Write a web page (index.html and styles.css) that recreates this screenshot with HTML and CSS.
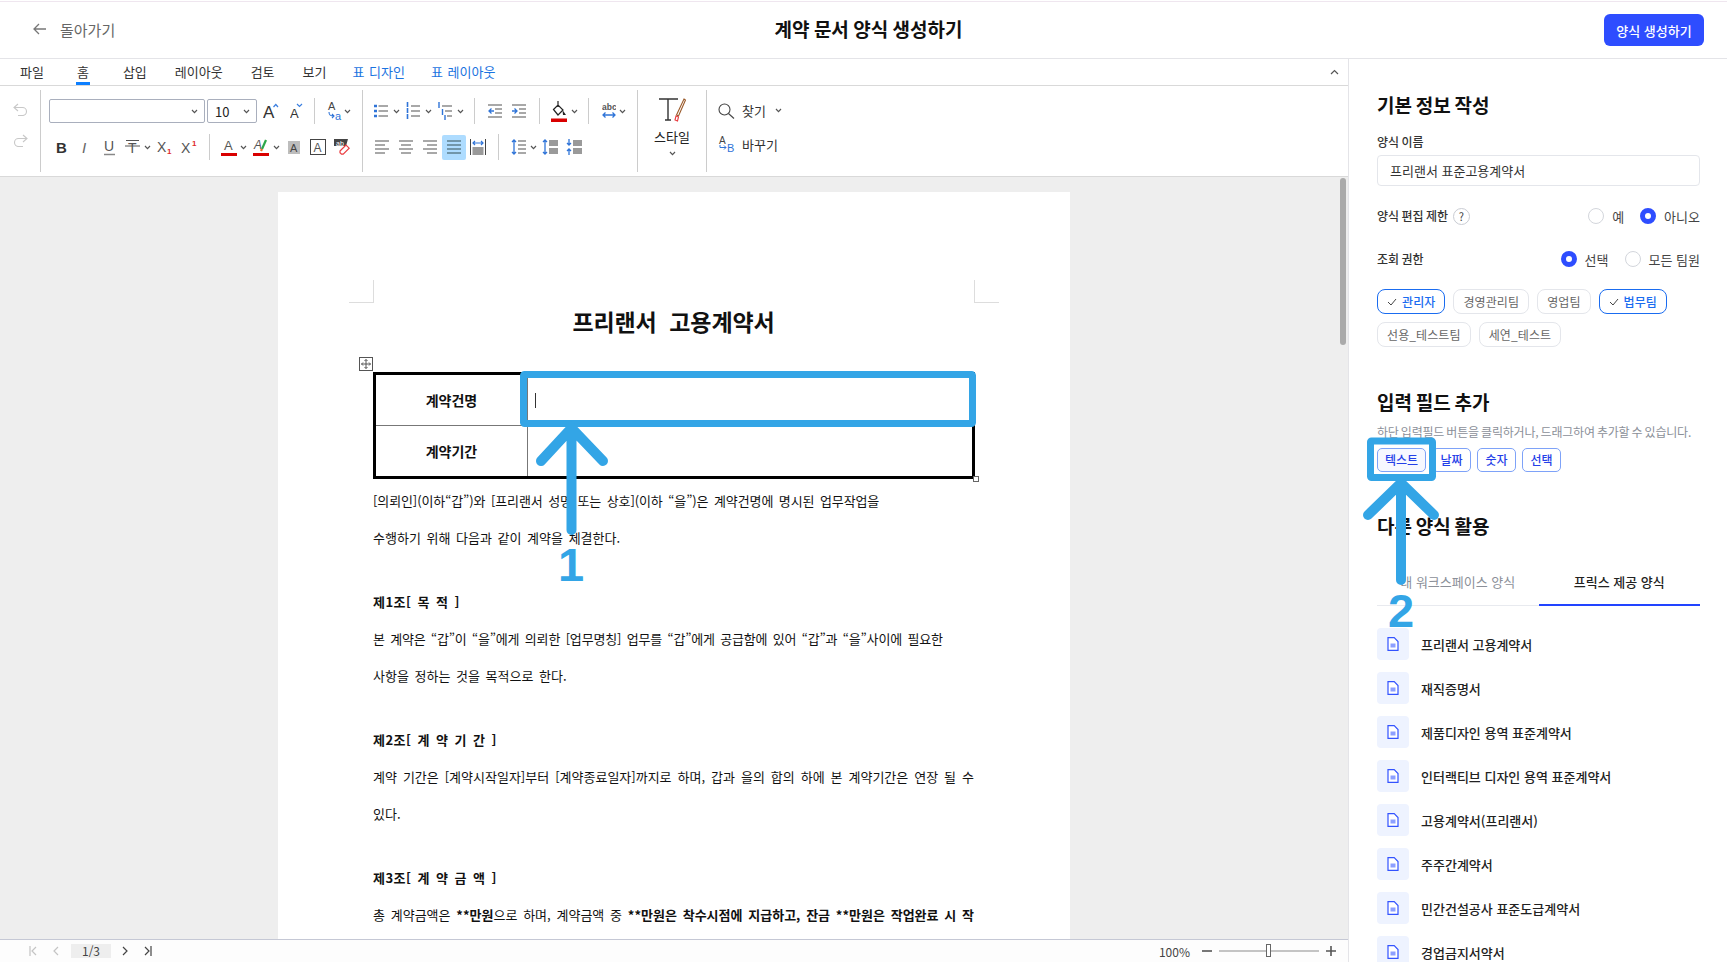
FILE: index.html
```html
<!DOCTYPE html>
<html lang="ko">

<head>
    <meta charset="UTF-8">
    <title>계약 문서 양식 생성하기</title>
    <link rel="stylesheet" href="styles.css">
</head>

<body>
    <svg class="defs" width="0" height="0">
        <symbol id="chev" viewBox="0 0 7 5"><path d="M1 1l2.5 2.6L6 1" fill="none" stroke="#555" stroke-width="1.2"/></symbol>
        <symbol id="doc" viewBox="0 0 12 14"><path d="M1 .7h6.2L11 4.5v8.8H1z" fill="#fff" stroke="#3353ff" stroke-width="1.2"/><rect x="3.5" y="6.5" width="5" height="4" fill="#8da0ff"/></symbol>
    </svg>

    <header class="topbar">
        <a class="back">
            <svg width="14" height="12" viewBox="0 0 14 12"><path d="M6 1L1 6l5 5M1 6h12" fill="none" stroke="#777" stroke-width="1.3"/></svg>
            돌아가기
        </a>
        <h1 class="page-title">계약 문서 양식 생성하기</h1>
        <button class="primary-btn">양식 생성하기</button>
    </header>

    <div class="main">
        <div class="editor">
            <nav class="tabs">
                <span class="tab first">파일</span>
                <span class="tab active">홈</span>
                <span class="tab">삽입</span>
                <span class="tab">레이아웃</span>
                <span class="tab">검토</span>
                <span class="tab view">보기</span>
                <span class="tab blue">표 디자인</span>
                <span class="tab blue">표 레이아웃</span>
                <svg class="collapse" width="9" height="6" viewBox="0 0 9 6"><path d="M1 5l3.5-3.5L8 5" fill="none" stroke="#555" stroke-width="1.2"/></svg>
            </nav>

            <div class="toolbar">
                <div class="group g-undo">
                    <svg width="15" height="13" viewBox="0 0 15 13"><path d="M5 1L1 4.5 5 8M1 4.5h8.5a4 4 0 0 1 0 8H5" fill="none" stroke="#c8c8c8" stroke-width="1.1"/></svg>
                    <svg width="15" height="13" viewBox="0 0 15 13"><path d="M10 1l4 3.5L10 8M14 4.5H5.5a4 4 0 0 0 0 8H10" fill="none" stroke="#c8c8c8" stroke-width="1.1"/></svg>
                </div>

                <div class="group g-font">
                    <div class="row">
                        <div class="select font-name"><svg class="chev"><use href="#chev"/></svg></div>
                        <div class="select font-size ml2"><span>10</span><svg class="chev"><use href="#chev"/></svg></div>
                        <svg class="ml6" width="16" height="18" viewBox="0 0 16 18"><text class="ic-t" x="0" y="16" font-size="17" fill="#333">A</text><path d="M10.500 5l2.300-2.500L15 5" fill="none" stroke="#3b7fe0" stroke-width="1.200"/></svg>
                        <svg class="ml11" width="13" height="18" viewBox="0 0 13 18"><text class="ic-t" x="0" y="16" font-size="13" fill="#333">A</text><path d="M7 2l2.500 2.500L12 2" fill="none" stroke="#3b7fe0" stroke-width="1.200"/></svg>
                        <i class="sep ml11"></i>
                        <svg class="ml12" width="16" height="22" viewBox="0 0 16 22"><text class="ic-t" x="1" y="10" font-size="11" fill="#444">A</text><text class="ic-t" x="8" y="20" font-size="11" fill="#2f74d8">a</text><path d="M2 12c0 3 1 4 5 4M5 14l2 2-2 2" fill="none" stroke="#2f74d8" stroke-width="1.100"/></svg>
                        <svg class="chev ml1"><use href="#chev"/></svg>
                    </div>
                    <div class="row">
                        <svg class="ml7" width="11" height="16" viewBox="0 0 11 16"><text class="ic-t" x="0" y="14" font-size="15" font-weight="700" fill="#333">B</text></svg>
                        <svg class="ml14" width="9" height="16" viewBox="0 0 9 16"><text class="ic-t" x="1" y="14" font-size="15" font-style="italic" fill="#666">I</text></svg>
                        <svg class="ml14" width="11" height="18" viewBox="0 0 11 18"><text class="ic-t" x="0" y="13" font-size="14" fill="#555">U</text><path d="M0 16.500h11" stroke="#888" stroke-width="1.500"/></svg>
                        <svg class="ml10" width="15" height="16" viewBox="0 0 15 16"><text class="ic-t" x="3" y="14" font-size="14" fill="#555">T</text><path d="M0 7h15" stroke="#555" stroke-width="1"/><path d="M1 1.500h13" stroke="#555" stroke-width="1"/></svg>
                        <svg class="chev ml4"><use href="#chev"/></svg>
                        <svg class="ml6" width="15" height="18" viewBox="0 0 15 18"><text class="ic-t" x="0" y="14" font-size="14" fill="#555">X</text><text class="ic-t" x="10" y="16" font-size="8" font-weight="700" fill="#e0282e">1</text></svg>
                        <svg class="ml9" width="16" height="18" viewBox="0 0 16 18"><text class="ic-t" x="0" y="15" font-size="14" fill="#555">X</text><text class="ic-t" x="11" y="8" font-size="8" font-weight="700" fill="#e0282e">1</text></svg>
                        <i class="sep ml12"></i>
                        <svg class="ml11" width="16" height="20" viewBox="0 0 16 20"><text class="ic-t" x="3" y="13" font-size="13" fill="#555">A</text><rect y="16" width="16" height="3" fill="#d90000"/></svg>
                        <svg class="chev ml3"><use href="#chev"/></svg>
                        <svg class="ml6" width="16" height="20" viewBox="0 0 16 20"><text class="ic-t" x="1" y="12" font-size="12" font-style="italic" fill="#555">A</text><path d="M13 3l-4 9" stroke="#2ca84a" stroke-width="2.200"/><path d="M9 12l-1 2" stroke="#e8702a" stroke-width="2.200"/><rect y="16" width="16" height="3" fill="#d90000"/></svg>
                        <svg class="chev ml4"><use href="#chev"/></svg>
                        <svg class="ml8" width="12" height="13" viewBox="0 0 12 13"><rect width="12" height="13" fill="#bdbdbd"/><text class="ic-t" x="2" y="11" font-size="11" fill="#444">A</text></svg>
                        <svg class="ml10" width="16" height="16" viewBox="0 0 16 16"><rect x=".5" y=".5" width="15" height="15" fill="#fff" stroke="#444"/><text class="ic-t" x="3.500" y="13" font-size="12" fill="#555">A</text></svg>
                        <svg class="ml8" width="16" height="16" viewBox="0 0 16 16"><path d="M0 0h14l-2 7H0z" fill="#444"/><text class="ic-t" x="2" y="6.500" font-size="7" fill="#fff">ab</text><path d="M6 12l6-6 3.200 3.200-6 6H7.500L6 13.700z" fill="#fff" stroke="#ea3b3f" stroke-width="1.200"/></svg>
                    </div>
                </div>

                <div class="group g-para">
                    <div class="row">
                        <svg width="14" height="14" viewBox="0 0 14 14"><path d="M4.500 2H14M4.500 7H14M4.500 12H14" stroke="#8c8c8c" stroke-width="1.600"/><path d="M0 2h3M0 7h3M0 12h3" stroke="#2f74d8" stroke-width="2.400"/></svg>
                        <svg class="chev ml5"><use href="#chev"/></svg>
                        <svg class="ml6" width="14" height="18" viewBox="0 0 14 18"><path d="M5 4h9M5 9h9M5 14h9" stroke="#8c8c8c" stroke-width="1.600"/><path d="M1.500 0v18" stroke="#2f74d8" stroke-width="1.600" stroke-dasharray="5 1"/></svg>
                        <svg class="chev ml5"><use href="#chev"/></svg>
                        <svg class="ml6" width="14" height="18" viewBox="0 0 14 18"><path d="M4 4h10M7 9h7M9 14h5" stroke="#8c8c8c" stroke-width="1.600"/><path d="M1 0v6M4.500 7v6M7 13v5" stroke="#2f74d8" stroke-width="1.400"/></svg>
                        <svg class="chev ml5"><use href="#chev"/></svg>
                        <i class="sep ml10"></i>
                        <svg class="ml13" width="14" height="14" viewBox="0 0 14 14"><path d="M0 1h14M7 5h7M7 9h7M0 13h14" stroke="#8c8c8c" stroke-width="1.600"/><path d="M6 7H1M3.500 4.500L1 7l2.500 2.500" fill="none" stroke="#2f74d8" stroke-width="1.300"/></svg>
                        <svg class="ml10" width="14" height="14" viewBox="0 0 14 14"><path d="M0 1h14M7 5h7M7 9h7M0 13h14" stroke="#8c8c8c" stroke-width="1.600"/><path d="M0 7h5M2.500 4.500L5 7 2.500 9.500" fill="none" stroke="#2f74d8" stroke-width="1.300"/></svg>
                        <i class="sep ml13"></i>
                        <svg class="ml11" width="16" height="21" viewBox="0 0 16 21"><path d="M7 0v6M2.500 8.500L7 4l5 5-5 5z" fill="none" stroke="#222" stroke-width="1.200"/><path d="M11.500 9l3.500 5h-3z" fill="#222"/><rect y="17.500" width="16" height="3.500" fill="#d90000"/></svg>
                        <svg class="chev ml4"><use href="#chev"/></svg>
                        <i class="sep ml10"></i>
                        <svg class="ml13" width="14" height="18" viewBox="0 0 14 18"><text class="ic-t" x="0" y="8" font-size="8.500" font-weight="700" fill="#555">abc</text><path d="M1 13h12M3.500 10.500L1 13l2.500 2.500M10.500 10.500L13 13l-2.500 2.500" fill="none" stroke="#2f74d8" stroke-width="1.300"/></svg>
                        <svg class="chev ml3"><use href="#chev"/></svg>
                    </div>
                    <div class="row">
                        <svg class="ml1" width="14" height="14" viewBox="0 0 14 14"><path d="M0 1h14M0 5h10M0 9h14M0 13h10" stroke="#8c8c8c" stroke-width="1.700"/></svg>
                        <svg class="ml10" width="14" height="14" viewBox="0 0 14 14"><path d="M0 1h14M2 5h10M0 9h14M2 13h10" stroke="#8c8c8c" stroke-width="1.700"/></svg>
                        <svg class="ml10" width="14" height="14" viewBox="0 0 14 14"><path d="M0 1h14M4 5h10M0 9h14M4 13h10" stroke="#8c8c8c" stroke-width="1.700"/></svg>
                        <div class="align-on ml5">
                            <svg width="14" height="14" viewBox="0 0 14 14"><path d="M0 1h14M0 5h14M0 9h14M0 13h14" stroke="#5d7f8f" stroke-width="1.700"/></svg>
                        </div>
                        <svg class="ml4" width="16" height="16" viewBox="0 0 16 16"><path d="M.5 0v16M15.500 0v16" stroke="#444"/><rect x="2.500" y="8" width="11" height="8" fill="#9a9a9a"/><path d="M3 4h10M5 2L3 4l2 2M11 2l2 2-2 2" fill="none" stroke="#2f74d8" stroke-width="1.200"/></svg>
                        <i class="sep ml12"></i>
                        <svg class="ml12" width="15" height="16" viewBox="0 0 15 16"><path d="M7 2h8M7 6h8M7 10h8M7 14h8" stroke="#8c8c8c" stroke-width="1.600"/><path d="M3 1v14M1 3l2-2 2 2M1 13l2 2 2-2" fill="none" stroke="#2f74d8" stroke-width="1.300"/></svg>
                        <svg class="chev ml4"><use href="#chev"/></svg>
                        <svg class="ml5" width="16" height="16" viewBox="0 0 16 16"><rect x="7" y="1" width="9" height="6" fill="#9a9a9a"/><rect x="7" y="9" width="9" height="6" fill="#9a9a9a"/><path d="M3 1v14M1 3l2-2 2 2M1 13l2 2 2-2" fill="none" stroke="#2f74d8" stroke-width="1.300"/></svg>
                        <svg class="ml8" width="16" height="16" viewBox="0 0 16 16"><rect x="7" y="1" width="9" height="6" fill="#9a9a9a"/><rect x="7" y="9" width="9" height="6" fill="#9a9a9a"/><path d="M3 0v6M1 4l2 2 2-2M3 16v-6M1 12l2-2 2 2" fill="none" stroke="#2f74d8" stroke-width="1.300"/></svg>
                    </div>
                </div>

                <div class="group g-style">
                    <svg width="27" height="24" viewBox="0 0 27 24"><path d="M0 1h19M9 1v21M6 22h6" fill="none" stroke="#333" stroke-width="1.400"/><path d="M25 1l1.500 1-7 16-2-1z" fill="#fff" stroke="#9a5a2a" stroke-width="1.100"/><path d="M17 18l2.500 1-1 4-2.500-1z" fill="#fff" stroke="#ea3b3f" stroke-width="1.100"/></svg>
                    <span class="style-label">스타일</span>
                    <svg class="chev"><use href="#chev"/></svg>
                </div>

                <div class="group g-find">
                    <div class="find-row">
                        <svg width="17" height="16" viewBox="0 0 17 16"><circle cx="6.500" cy="6.500" r="5.500" fill="none" stroke="#444" stroke-width="1.100"/><path d="M10.500 10.500l5.500 5" stroke="#444" stroke-width="1.100"/></svg>
                        <span>찾기</span>
                        <svg class="chev ml2"><use href="#chev"/></svg>
                    </div>
                    <div class="find-row">
                        <svg width="17" height="17" viewBox="0 0 17 17"><text class="ic-t" x="1" y="8" font-size="10" fill="#444">A</text><text class="ic-t" x="9" y="16" font-size="11" fill="#2f74d8">B</text><path d="M2 9v2.500h6M6 9.500l2 2-2 2" fill="none" stroke="#2f74d8" stroke-width="1"/></svg>
                        <span>바꾸기</span>
                    </div>
                </div>
            </div>

            <div class="doc-area">
                <i class="scroll-thumb"></i>
                <div class="page">
                    <i class="crop crop-l"></i>
                    <i class="crop crop-r"></i>
                    <h2 class="doc-title">프리랜서&nbsp; 고용계약서</h2>

                    <div class="doc-table-wrap">
                        <svg class="move-handle" width="14" height="14" viewBox="0 0 14 14"><rect x=".5" y=".5" width="13" height="13" fill="#fff" stroke="#555"/><path d="M7 2.500v9M2.500 7h9M5.500 4L7 2.500 8.500 4M5.500 10L7 11.500 8.500 10M4 5.500L2.500 7 4 8.500M10 5.500L11.500 7 10 8.500" fill="none" stroke="#555"/></svg>
                        <table class="doc-table">
                            <tr>
                                <th>계약건명</th>
                                <td><i class="caret"></i></td>
                            </tr>
                            <tr>
                                <th>계약기간</th>
                                <td></td>
                            </tr>
                        </table>
                        <i class="resize-handle"></i>
                    </div>

                    <div class="para first">
                        <p class="tight">[의뢰인](이하“갑”)와 [프리랜서 성명 또는 상호](이하 “을”)은 계약건명에 명시된 업무작업을</p>
                        <p>수행하기 위해 다음과 같이 계약을 체결한다.</p>
                    </div>
                    <div class="para">
                        <p class="head"><b>제1조[ 목 적 ]</b></p>
                        <p class="tighter">본 계약은 “갑”이 “을”에게 의뢰한 [업무명칭] 업무를 “갑”에게 공급함에 있어 “갑”과 “을”사이에 필요한</p>
                        <p>사항을 정하는 것을 목적으로 한다.</p>
                    </div>
                    <div class="para">
                        <p class="head"><b>제2조[ 계 약 기 간 ]</b></p>
                        <p class="just">계약 기간은 [계약시작일자]부터 [계약종료일자]까지로 하며, 갑과 을의 합의 하에 본 계약기간은 연장 될 수</p>
                        <p>있다.</p>
                    </div>
                    <div class="para">
                        <p class="head"><b>제3조[ 계 약 금 액 ]</b></p>
                        <p class="just">총 계약금액은 <b>**만원</b>으로 하며, 계약금액 중 <b>**만원은 착수시점에 지급하고, 잔금 **만원은 작업완료 시 작</b></p>
                    </div>
                </div>
            </div>

            <footer class="statusbar">
                <div class="pager">
                    <svg width="8" height="10" viewBox="0 0 8 10"><path d="M1 0v10M7 1L3 5l4 4" fill="none" stroke="#c4c4c4" stroke-width="1.200"/></svg>
                    <svg class="ml16" width="6" height="10" viewBox="0 0 6 10"><path d="M5 1L1 5l4 4" fill="none" stroke="#c4c4c4" stroke-width="1.200"/></svg>
                    <span class="page-no">1/3</span>
                    <svg class="ml11" width="6" height="10" viewBox="0 0 6 10"><path d="M1 1l4 4-4 4" fill="none" stroke="#444" stroke-width="1.200"/></svg>
                    <svg class="ml16" width="8" height="10" viewBox="0 0 8 10"><path d="M7 0v10M1 1l4 4-4 4" fill="none" stroke="#444" stroke-width="1.200"/></svg>
                </div>
                <div class="zoom">
                    <span>100%</span>
                    <svg class="ml12" width="10" height="10" viewBox="0 0 10 10"><path d="M0 5h10" stroke="#555" stroke-width="1.600"/></svg>
                    <div class="slider"><i class="thumb"></i></div>
                    <svg class="ml7" width="10" height="10" viewBox="0 0 10 10"><path d="M0 5h10M5 0v10" stroke="#555" stroke-width="1.600"/></svg>
                </div>
            </footer>
        </div>

        <aside class="panel">
            <h3 class="panel-title">기본 정보 작성</h3>
            <label class="field-label">양식 이름</label>
            <div class="text-input">프리랜서 표준고용계약서</div>

            <div class="option-row edit-row">
                <span class="field-label">양식 편집 제한</span>
                <span class="help">?</span>
                <div class="radios">
                    <span class="radio"></span><span class="radio-label">예</span>
                    <span class="radio on"></span><span class="radio-label">아니오</span>
                </div>
            </div>
            <div class="option-row view-row">
                <span class="field-label">조회 권한</span>
                <div class="radios">
                    <span class="radio on"></span><span class="radio-label">선택</span>
                    <span class="radio"></span><span class="radio-label">모든 팀원</span>
                </div>
            </div>

            <div class="chips">
                <span class="chip on"><svg width="10" height="8" viewBox="0 0 10 8"><path d="M1 4l3 3 5-6" fill="none" stroke="#444" stroke-width="1"/></svg>관리자</span>
                <span class="chip">경영관리팀</span>
                <span class="chip">영업팀</span>
                <span class="chip on"><svg width="10" height="8" viewBox="0 0 10 8"><path d="M1 4l3 3 5-6" fill="none" stroke="#444" stroke-width="1"/></svg>법무팀</span>
                <span class="chip">선용_테스트팀</span>
                <span class="chip">세연_테스트</span>
            </div>

            <h3 class="panel-title fields-title">입력 필드 추가</h3>
            <p class="hint">하단 입력필드 버튼을 클릭하거나, 드래그하여 추가할 수 있습니다.</p>
            <div class="field-btns">
                <span class="field-btn first">텍스트</span>
                <span class="field-btn">날짜</span>
                <span class="field-btn">숫자</span>
                <span class="field-btn">선택</span>
            </div>

            <h3 class="panel-title other-title">다른 양식 활용</h3>
            <div class="panel-tabs">
                <span class="panel-tab">내 워크스페이스 양식</span>
                <span class="panel-tab on">프릭스 제공 양식</span>
            </div>
            <ul class="form-list">
                <li><span class="doc-icon"><svg width="12" height="14"><use href="#doc"/></svg></span>프리랜서 고용계약서</li>
                <li><span class="doc-icon"><svg width="12" height="14"><use href="#doc"/></svg></span>재직증명서</li>
                <li><span class="doc-icon"><svg width="12" height="14"><use href="#doc"/></svg></span>제품디자인 용역 표준계약서</li>
                <li><span class="doc-icon"><svg width="12" height="14"><use href="#doc"/></svg></span>인터랙티브 디자인 용역 표준계약서</li>
                <li><span class="doc-icon"><svg width="12" height="14"><use href="#doc"/></svg></span>고용계약서(프리랜서)</li>
                <li><span class="doc-icon"><svg width="12" height="14"><use href="#doc"/></svg></span>주주간계약서</li>
                <li><span class="doc-icon"><svg width="12" height="14"><use href="#doc"/></svg></span>민간건설공사 표준도급계약서</li>
                <li><span class="doc-icon"><svg width="12" height="14"><use href="#doc"/></svg></span>경업금지서약서</li>
            </ul>
        </aside>
    </div>

    <!-- 안내용 화살표 -->
    <svg class="overlay" width="1727" height="962" viewBox="0 0 1727 962">
        <rect x="523.500" y="374.500" width="449" height="49" rx="1"/>
        <path d="M571.500 428v102M541 461l30.500-33 31.500 33"/>
        <text x="571" y="581">1</text>
        <rect x="1370.500" y="441" width="62" height="36.500" rx="1"/>
        <path d="M1401 484v96M1368 515l33-32 33 32"/>
        <text x="1401" y="627">2</text>
    </svg>
</body>

</html>
```

FILE: styles.css
```css
* {
    box-sizing: border-box;
}

html,
body {
    height: 100%;
}

body {
    position: relative;
    margin: 0;
    height: 962px;
    overflow: hidden;
    display: flex;
    flex-direction: column;
    background: #fff;
    color: #222;
    font-family: "Noto Sans CJK KR", "Noto Sans", sans-serif;
    font-size: 13px;
}

.defs {
    position: absolute;
}

i {
    display: block;
    font-style: normal;
}

svg {
    flex: none;
    display: block;
}

.ic-t {
    font-family: "Liberation Sans", sans-serif;
}

.ml1 { margin-left: 1px; }
.ml2 { margin-left: 2px; }
.ml3 { margin-left: 3px; }
.ml4 { margin-left: 4px; }
.ml5 { margin-left: 5px; }
.ml6 { margin-left: 6px; }
.ml7 { margin-left: 7px; }
.ml8 { margin-left: 8px; }
.ml9 { margin-left: 9px; }
.ml10 { margin-left: 10px; }
.ml11 { margin-left: 11px; }
.ml12 { margin-left: 12px; }
.ml13 { margin-left: 13px; }
.ml14 { margin-left: 14px; }
.ml16 { margin-left: 16px; }

/* top bar */
.topbar {
    flex: none;
    height: 58px;
    margin-top: 1px;
    padding: 0 23px 0 33px;
    display: grid;
    grid-template-columns: 1fr auto 1fr;
    align-items: center;
    border-top: 1px solid #efe6ef;
    border-bottom: 1px solid #e4e4e8;
}

.back {
    display: flex;
    align-items: center;
    gap: 13px;
    margin-bottom: 2px;
    color: #666;
    font-size: 15px;
}

.page-title {
    margin: 0 0 3px;
    font-size: 19px;
    font-weight: 700;
    word-spacing: -1px;
    color: #111;
}

.primary-btn {
    justify-self: end;
    width: 100px;
    height: 32px;
    border: none;
    border-radius: 6px;
    background: #2e4dff;
    color: #fff;
    font-family: inherit;
    font-size: 13px;
    font-weight: 500;
}

.main {
    flex: 1;
    min-height: 0;
    display: flex;
}

/* editor */
.editor {
    width: 1349px;
    flex: none;
    display: flex;
    flex-direction: column;
    border-right: 1px solid #e4e4e8;
}

.tabs {
    flex: none;
    height: 27px;
    padding-left: 20px;
    display: flex;
    align-items: center;
    border-bottom: 1px solid #d9d9d9;
    font-size: 13px;
    color: #333;
}

.tab {
    position: relative;
    margin-right: 28px;
    line-height: 26px;
}

.tab.first {
    margin-right: 33px;
}

.tab.active {
    margin-right: 34px;
}

.tab.view {
    margin-right: 26px;
}

.tab.active::after {
    content: "";
    position: absolute;
    left: -1px;
    right: -1px;
    bottom: 0;
    height: 3px;
    background: #0d7fff;
}

.tab.blue {
    margin-right: 26px;
    word-spacing: 1px;
    color: #1a73e0;
}

.collapse {
    margin-left: auto;
    margin-right: 9px;
}

.toolbar {
    flex: none;
    height: 91px;
    padding-top: 4px;
    display: flex;
    border-bottom: 1px solid #d9d9d9;
}

.group {
    height: 82px;
    border-right: 1px solid #ccc;
}

.g-undo {
    width: 41px;
    padding: 13px 0 0 13px;
    display: flex;
    flex-direction: column;
    gap: 18px;
}

.g-font {
    width: 322px;
    padding: 8px 0 0 8px;
}

.g-para {
    width: 275px;
    padding: 8px 0 0 11px;
}

.row {
    height: 26px;
    display: flex;
    align-items: center;
    margin-bottom: 10px;
}

.chev {
    width: 7px;
    height: 5px;
}

.sep {
    width: 1px;
    height: 26px;
    flex: none;
    background: #ccc;
}

.select {
    height: 24px;
    display: flex;
    align-items: center;
    justify-content: flex-end;
    padding-right: 6px;
    border: 1px solid #a9afbd;
    border-radius: 2px;
    font-size: 13px;
}

.font-name {
    width: 156px;
}

.font-size {
    width: 50px;
    justify-content: space-between;
    padding-left: 7px;
}

.align-on {
    width: 24px;
    height: 25px;
    display: flex;
    align-items: center;
    justify-content: center;
    border-radius: 2px;
    background: #aedcff;
}

.g-style {
    width: 69px;
    padding-top: 8px;
    display: flex;
    flex-direction: column;
    align-items: center;
}

.style-label {
    margin-top: 3px;
    font-size: 13px;
    line-height: 24px;
}

.g-style .chev {
    margin-top: 2px;
}

.g-find {
    border: none;
    padding: 12px 0 0 11px;
    display: flex;
    flex-direction: column;
    gap: 17px;
}

.find-row {
    height: 17px;
    display: flex;
    align-items: center;
    gap: 7px;
    font-size: 13px;
    color: #333;
}

/* document */
.doc-area {
    position: relative;
    flex: 1;
    min-height: 0;
    overflow: hidden;
    padding-top: 15px;
    background: #eeeeee;
}

.scroll-thumb {
    position: absolute;
    left: 1340px;
    top: 1px;
    width: 6px;
    height: 167px;
    border-radius: 3px;
    background: #aaa;
}

.page {
    position: relative;
    width: 792px;
    height: 1100px;
    margin-left: 278px;
    padding: 111px 96px 0 95px;
    background: #fff;
    font-family: "Noto Sans CJK KR", sans-serif;
    color: #111;
}

.crop {
    position: absolute;
    top: 88px;
    width: 25px;
    height: 23px;
    border-bottom: 1px solid #ddd;
}

.crop-l {
    left: 71px;
    border-right: 1px solid #ddd;
}

.crop-r {
    left: 696px;
    border-left: 1px solid #ddd;
}

.doc-title {
    margin: 0;
    height: 36px;
    line-height: 36px;
    text-align: center;
    font-size: 23px;
    font-weight: 700;
    letter-spacing: -.1px;
}

.doc-table-wrap {
    position: relative;
    margin-top: 33px;
}

.move-handle {
    position: absolute;
    left: -14px;
    top: -15px;
}

.doc-table {
    width: 602px;
    height: 107px;
    border-collapse: collapse;
    border: 3px solid #000;
}

.doc-table th,
.doc-table td {
    border: 1px solid #777;
    padding: 0;
}

.doc-table th {
    width: 153px;
    font-size: 14px;
    font-weight: 700;
}

.doc-table td {
    padding-left: 7px;
}

.caret {
    width: 1px;
    height: 15px;
    background: #333;
}

.resize-handle {
    position: absolute;
    left: 600px;
    top: 104px;
    width: 6px;
    height: 6px;
    border: 1px solid #666;
    background: #fff;
}

.para {
    margin-top: 27px;
}

.para.first {
    margin-top: 3px;
}

.para p {
    margin: 0;
    line-height: 37px;
    height: 37px;
    font-size: 13px;
    white-space: nowrap;
    word-spacing: 2px;
}

.para p.tight {
    letter-spacing: -.1px;
}

.para p.tighter {
    letter-spacing: -.18px;
}

.para p.head {
    letter-spacing: .45px;
}

.para p.just {
    white-space: normal;
    text-align: justify;
    text-align-last: justify;
}

/* status */
.statusbar {
    flex: none;
    height: 23px;
    padding: 0 12px 0 29px;
    display: flex;
    align-items: center;
    justify-content: space-between;
    border-top: 1px solid #c5c8d5;
    background: #fdfdfd;
    font-size: 12px;
    color: #444;
}

.pager,
.zoom {
    display: flex;
    align-items: center;
}

.page-no {
    width: 40px;
    height: 14px;
    margin-left: 12px;
    line-height: 14px;
    text-align: center;
    background: #eeeeee;
}

.slider {
    position: relative;
    width: 100px;
    height: 2px;
    margin-left: 7px;
    background: #c4c4c4;
}

.thumb {
    position: absolute;
    left: 47px;
    top: -6px;
    width: 5px;
    height: 13px;
    border: 1px solid #666;
    background: #fff;
}

/* right panel */
.panel {
    flex: 1;
    padding: 32px 27px 0 28px;
    overflow: hidden;
}

.panel-title {
    margin: 0;
    font-size: 19px;
    line-height: 28px;
    font-weight: 700;
    word-spacing: -1.5px;
    color: #111;
}

.field-label {
    display: block;
    font-size: 12px;
    line-height: 18px;
    font-weight: 500;
    word-spacing: -1px;
    color: #333;
}

.panel > .field-label {
    margin-top: 14px;
}

.text-input {
    height: 31px;
    margin-top: 4px;
    padding-left: 12px;
    border: 1px solid #e4e6eb;
    border-radius: 4px;
    font-size: 13px;
    line-height: 29px;
    color: #333;
}

.option-row {
    display: flex;
    align-items: center;
    gap: 5px;
    height: 18px;
}

.edit-row {
    margin-top: 21px;
}

.view-row {
    margin-top: 25px;
}

.help {
    width: 17px;
    height: 17px;
    border: 1px solid #c9ccd3;
    border-radius: 50%;
    font-size: 11px;
    line-height: 15px;
    text-align: center;
    color: #444;
}

.radios {
    margin-left: auto;
    display: flex;
    align-items: center;
    font-size: 13px;
    color: #444;
}

.radio {
    width: 16px;
    height: 16px;
    margin-right: 8px;
    border: 1px solid #d3d6dc;
    border-radius: 50%;
    background: #fff;
}

.radio.on {
    border: 5px solid #2e4dff;
}

.radio-label {
    margin-right: 16px;
}

.radio-label:last-child {
    margin-right: 0;
}

.chips {
    margin-top: 21px;
    display: flex;
    flex-wrap: wrap;
    gap: 8px;
}

.chip {
    height: 25px;
    padding: 0 9px;
    display: flex;
    align-items: center;
    gap: 5px;
    border: 1px solid #e4e6eb;
    border-radius: 8px;
    font-size: 12px;
    letter-spacing: .1px;
    color: #666;
}

.chip.on {
    border-color: #1a6cf0;
    color: #1a6cf0;
    font-weight: 500;
}

.fields-title {
    margin-top: 41px;
}

.hint {
    margin: 7px 0 0;
    font-size: 12px;
    line-height: 18px;
    letter-spacing: -.2px;
    word-spacing: -1px;
    white-space: nowrap;
    color: #8b8f98;
}

.field-btns {
    margin-top: 7px;
    display: flex;
    gap: 6px;
}

.field-btn {
    width: 39px;
    height: 24px;
    border: 1px solid #7ea2f8;
    border-radius: 5px;
    font-size: 12px;
    line-height: 22px;
    font-weight: 500;
    text-align: center;
    color: #2440e8;
}

.field-btn.first {
    width: 49px;
    background: #f6f8ff;
}

.other-title {
    margin-top: 40px;
}

.panel-tabs {
    margin-top: 25px;
    display: flex;
    height: 41px;
    border-bottom: 1px solid #e8eaef;
}

.panel-tab {
    flex: 1;
    text-align: center;
    font-size: 13px;
    line-height: 33px;
    color: #8b8f98;
}

.panel-tab.on {
    height: 41px;
    border-bottom: 2px solid #2244ff;
    color: #222;
    font-weight: 500;
}

.form-list {
    margin: 22px 0 0;
    padding: 0;
    list-style: none;
}

.form-list li {
    height: 32px;
    margin-bottom: 12px;
    display: flex;
    align-items: center;
    gap: 12px;
    font-size: 13px;
    font-weight: 500;
    color: #222;
}

.doc-icon {
    width: 32px;
    height: 32px;
    display: flex;
    align-items: center;
    justify-content: center;
    border-radius: 4px;
    background: #eef3ff;
}

/* annotation arrows */
.overlay {
    position: absolute;
    left: 0;
    top: 0;
    pointer-events: none;
}

.overlay rect {
    fill: none;
    stroke: #33a5e6;
    stroke-width: 7;
}

.overlay path {
    fill: none;
    stroke: #33a5e6;
    stroke-width: 10;
    stroke-linecap: round;
    stroke-linejoin: miter;
}

.overlay text {
    fill: #33a5e6;
    font-family: "Liberation Sans", sans-serif;
    font-size: 47px;
    font-weight: 700;
    text-anchor: middle;
}
```
